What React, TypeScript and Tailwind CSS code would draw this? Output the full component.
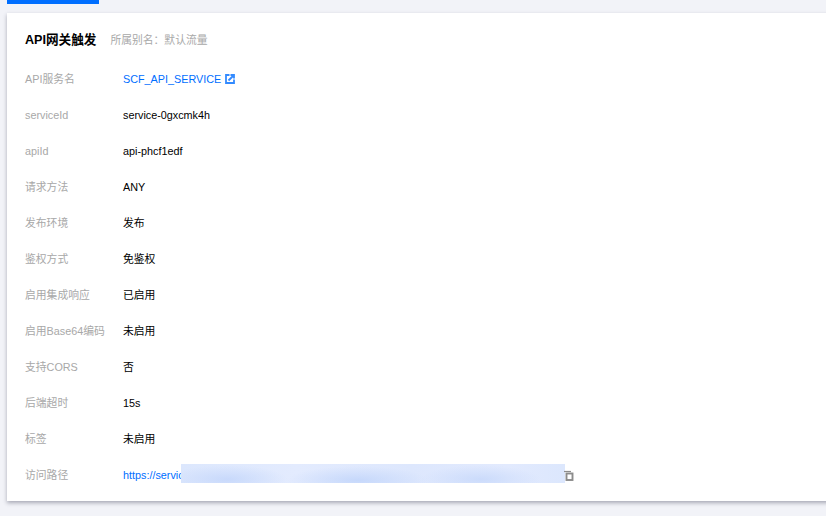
const rows = [
  { label: "serviceId", value: "service-0gxcmk4h" },
  { label: "apiId", value: "api-phcf1edf" },
  { label: "请求方法", value: "ANY" },
  { label: "发布环境", value: "发布" },
  { label: "鉴权方式", value: "免鉴权" },
  { label: "启用集成响应", value: "已启用" },
  { label: "启用Base64编码", value: "未启用" },
  { label: "支持CORS", value: "否" },
  { label: "后端超时", value: "15s" },
  { label: "标签", value: "未启用" },
];

function Row({ label, children }: { label: string; children: React.ReactNode }) {
  return (
    <div className="flex h-9 items-center">
      <div className="w-[98px] shrink-0 text-[#a8a8a8]">{label}</div>
      {children}
    </div>
  );
}

export default function App() {
  return (
    <div className="h-[516px] w-[826px] overflow-hidden bg-[#f2f3f8] pl-[7px] font-['Liberation_Sans','Noto_Sans_CJK_SC',sans-serif] text-[10.8px] text-black">
      <div className="h-[4px] w-[92px] bg-[#006eff]" />
      <div className="mt-[9px] h-[488px] w-[830px] bg-white pl-[18px] pt-[18px] shadow-[0_2px_4px_rgba(54,58,80,0.4)]">
        <div className="flex h-[18px] items-center">
          <h2 className="text-[12.6px] font-semibold">API网关触发</h2>
          <span className="ml-[14px] text-[#a8a8a8]">所属别名：默认流量</span>
        </div>
        <div className="mt-[12px]">
          <Row label="API服务名">
            <a className="flex items-center text-[#006eff]">
              SCF_API_SERVICE
              <svg viewBox="0 0 10 10" className="ml-[4px] size-[10px] opacity-80" fill="none" stroke="currentColor">
                <path d="M4.5 1H1v8h8V5.5" strokeWidth="1.8" />
                <path d="M3.5 6.5l5-5M5.5 1h3.5v3.5" strokeWidth="1.8" />
              </svg>
            </a>
          </Row>
          {rows.map((row) => (
            <Row key={row.label} label={row.label}>
              <span>{row.value}</span>
            </Row>
          ))}
          <Row label="访问路径">
            <div className="relative flex items-center">
              <span className="whitespace-nowrap text-[#006eff]">https://service-0gxcmk4h</span>
              <div className="absolute left-[58px] top-[-3px] h-[19px] w-[384px] bg-[radial-gradient(ellipse_60px_14px_at_12%_80%,#c8d9fb,transparent),radial-gradient(ellipse_70px_14px_at_46%_85%,#c6d8fb,transparent),radial-gradient(ellipse_60px_14px_at_78%_80%,#cbdbfb,transparent),linear-gradient(90deg,#dce7fd,#e3ebfe_30%,#dde7fd_60%,#e2eafe_85%,#dce7fd)]" />
              <svg
                viewBox="0 0 10 11"
                className="absolute left-[441px] top-[3px] h-[11px] w-[10px] text-[#8c8c8c]"
                fill="none"
                stroke="currentColor"
              >
                <path d="M0 1.5h7" strokeWidth="1.2" />
                <rect x="2.5" y="3.5" width="6" height="6.5" strokeWidth="1.9" />
              </svg>
            </div>
          </Row>
        </div>
      </div>
    </div>
  );
}
